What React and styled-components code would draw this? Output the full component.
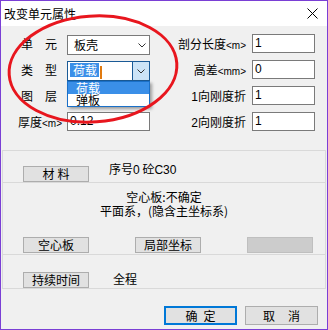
import styled, { createGlobalStyle } from 'styled-components';

const GlobalStyle = createGlobalStyle`
  html, body {
    margin: 0;
    padding: 0;
    background: #ffffff;
  }
  body {
    font-family: "Noto Sans CJK SC", "Liberation Sans", sans-serif;
    font-size: 12px;
    color: #000;
  }
  * {
    box-sizing: border-box;
  }
`;

const Window = styled.div`
  position: relative;
  width: 328px;
  height: 330px;
  border: 1px solid #7a3fd5;
  background: #f0f0f0;
  display: flex;
  flex-direction: column;
  overflow: hidden;
`;

const TitleBar = styled.div`
  height: 25px;
  flex: none;
  background: #ffffff;
  display: flex;
  align-items: center;
  justify-content: space-between;
  padding: 0 9px 0 3px;
`;

const Title = styled.span`
  font-size: 12px;
  line-height: 14px;
`;

const Body = styled.div`
  flex: 1;
  display: flex;
  flex-direction: column;
  padding: 0 1px 0 1px;
`;

const TopArea = styled.div`
  height: 124px;
  flex: none;
  display: flex;
  justify-content: space-between;
  padding: 8px 11px 0 16px;
`;

const Column = styled.div`
  display: flex;
  flex-direction: column;
`;

const Row = styled.div`
  height: 26px;
  display: flex;
  align-items: flex-start;
  justify-content: ${p => (p.$right ? 'flex-end' : 'flex-start')};
`;

const Label = styled.span`
  width: 49px;
  line-height: 19px;
  white-space: nowrap;
  padding-left: ${p => p.$indent || 0}px;
  letter-spacing: ${p => p.$spacing || 0}px;
`;

const RightLabel = styled.span`
  line-height: 19px;
  white-space: nowrap;
  padding-right: 6px;
`;

const Unit = styled.span`
  font-family: "Liberation Sans", sans-serif;
  font-size: 10px;
  letter-spacing: 0;
`;

const Digit = styled.span`
  font-family: "Liberation Sans", sans-serif;
`;

const Combo = styled.div`
  position: relative;
  width: 83px;
  height: 20px;
  margin-top: 1px;
  background: #ffffff;
  border: 1px solid ${p => (p.$focused ? '#1a5a96' : '#7a7a7a')};
  display: flex;
  align-items: center;
`;

const ComboText = styled.span`
  flex: 1;
  padding-left: 6px;
  line-height: 14px;
`;

const Selected = styled.span`
  display: inline-block;
  margin-left: -4px;
  padding: 0 2px 0 3px;
  background: #3a8fe8;
  color: #ffffff;
  line-height: 14px;
`;

const Caret = styled.span`
  display: inline-block;
  width: 2px;
  height: 13px;
  margin-left: 1px;
  vertical-align: middle;
  background: #e07a10;
`;

const ArrowBox = styled.div`
  width: ${p => (p.$active ? '17px' : '14px')};
  height: 100%;
  display: flex;
  align-items: center;
  justify-content: center;
  background: ${p => (p.$active ? '#cce4f7' : 'transparent')};
  border-left: ${p => (p.$active ? '1px solid #1a5a96' : 'none')};
`;

const DropList = styled.div`
  position: absolute;
  top: 19px;
  left: -1px;
  width: 83px;
  background: #ffffff;
  border: 1px solid #1a70c8;
  box-shadow: 2px 2px 3px rgba(0, 0, 0, 0.35);
  z-index: 2;
`;

const DropItem = styled.div`
  height: 12px;
  line-height: 12px;
  padding-left: 8px;
  background: ${p => (p.$active ? '#3a8fe8' : '#ffffff')};
  color: ${p => (p.$active ? '#ffffff' : '#000')};
  font-size: 12px;
  overflow: visible;
`;

const TextInput = styled.div`
  width: ${p => p.$width || 63}px;
  height: 19px;
  background: #ffffff;
  border: 1px solid #7a7a7a;
  padding-left: 2px;
  line-height: 17px;
  font-family: "Liberation Sans", sans-serif;
  font-size: 12px;
`;

const GroupStack = styled.div`
  border: 1px solid #d9d9d9;
  display: flex;
  flex-direction: column;
`;

const Group = styled.div`
  height: ${p => p.$height}px;
  display: flex;
  flex-direction: ${p => (p.$column ? 'column' : 'row')};
  align-items: ${p => (p.$column ? 'stretch' : 'flex-end')};
  border-top: ${p => (p.$first ? 'none' : '1px solid #d9d9d9')};
  padding-left: 20px;
`;

const InfoText = styled.span`
  align-self: ${p => (p.$top ? 'flex-start' : 'center')};
  margin-top: ${p => p.$offset || 0}px;
  margin-left: ${p => p.$left || 0}px;
  line-height: 14px;
  white-space: pre;
`;

const CenterText = styled.div`
  margin-left: -20px;
  padding-top: 7px;
  text-align: center;
  line-height: 14px;
`;

const ButtonRow = styled.div`
  margin-top: auto;
  margin-bottom: 1px;
  display: flex;
  gap: ${p => p.$gap || 46}px;
`;

const Button = styled.div`
  width: ${p => p.$width || 66}px;
  height: ${p => p.$height || 16}px;
  flex: none;
  display: flex;
  align-items: center;
  justify-content: center;
  background: ${p => (p.$disabled ? '#cccccc' : '#e1e1e1')};
  border: ${p => (p.$default ? '2px solid #0078d7' : `1px solid ${p.$disabled ? '#bfbfbf' : '#adadad'}`)};
  font-size: 12px;
  line-height: 14px;
  letter-spacing: ${p => p.$spacing || 0}px;
  text-indent: ${p => p.$spacing || 0}px;
  white-space: pre;
`;

const Footer = styled.div`
  flex: 1;
  display: flex;
  justify-content: flex-end;
  align-items: flex-start;
  gap: 8px;
  padding: 17px 8px 0 0;
`;

const Overlay = styled.svg`
  position: absolute;
  top: 0;
  left: 0;
  pointer-events: none;
  z-index: 5;
`;

const Chevron = () => (
  <svg width="8" height="5" viewBox="0 0 8 5">
    <polyline points="0.5,0.5 4,4 7.5,0.5" fill="none" stroke="#333" strokeWidth="1" />
  </svg>
);

const CloseIcon = () => (
  <svg width="11" height="11" viewBox="0 0 11 11">
    <path d="M0.5 0.5 L10.5 10.5 M10.5 0.5 L0.5 10.5" stroke="#000" strokeWidth="1" />
  </svg>
);

const App = () => {
  return (
    <>
      <GlobalStyle />
      <Window>
        <TitleBar>
          <Title>改变单元属性</Title>
          <CloseIcon />
        </TitleBar>
        <Body>
          <TopArea>
            <Column>
              <Row>
                <Label $indent={3} $spacing={12}>单元</Label>
                <Combo>
                  <ComboText>板壳</ComboText>
                  <ArrowBox><Chevron /></ArrowBox>
                </Combo>
              </Row>
              <Row>
                <Label $indent={3} $spacing={12}>类型</Label>
                <Combo $focused>
                  <ComboText><Selected>荷载</Selected><Caret /></ComboText>
                  <ArrowBox $active><Chevron /></ArrowBox>
                  <DropList>
                    <DropItem $active>荷载</DropItem>
                    <DropItem>弹板</DropItem>
                  </DropList>
                </Combo>
              </Row>
              <Row>
                <Label $indent={3} $spacing={12}>图层</Label>
                <Combo>
                  <ComboText />
                  <ArrowBox><Chevron /></ArrowBox>
                </Combo>
              </Row>
              <Row>
                <Label>厚度<Unit>&lt;m&gt;</Unit></Label>
                <TextInput $width={83}>0.12</TextInput>
              </Row>
            </Column>
            <Column>
              <Row $right>
                <RightLabel>剖分长度<Unit>&lt;m&gt;</Unit></RightLabel>
                <TextInput>1</TextInput>
              </Row>
              <Row $right>
                <RightLabel>高差<Unit>&lt;mm&gt;</Unit></RightLabel>
                <TextInput>0</TextInput>
              </Row>
              <Row $right>
                <RightLabel><Digit>1</Digit>向刚度折</RightLabel>
                <TextInput>1</TextInput>
              </Row>
              <Row $right>
                <RightLabel><Digit>2</Digit>向刚度折</RightLabel>
                <TextInput>1</TextInput>
              </Row>
            </Column>
          </TopArea>

          <GroupStack>
            <Group $first $height={31}>
              <Button $spacing={3}>材料</Button>
              <InfoText $top $offset={11} $left={20}>序号<Digit>0</Digit> 砼<Digit>C30</Digit></InfoText>
            </Group>
            <Group $column $height={72}>
              <CenterText>
                <div>空心板:不确定</div>
                <div>平面系，(隐含主坐标系)</div>
              </CenterText>
              <ButtonRow>
                <Button>空心板</Button>
                <Button>局部坐标</Button>
                <Button $disabled />
              </ButtonRow>
            </Group>
            <Group $height={34}>
              <Button>持续时间</Button>
              <InfoText $top $offset={17} $left={24}>全程</InfoText>
            </Group>
          </GroupStack>

          <Footer>
            <Button $default $width={73} $height={19} $spacing={6}>确定</Button>
            <Button $width={73} $height={19} $spacing={13}>取消</Button>
          </Footer>
        </Body>

        <Overlay width="328" height="330" viewBox="0 0 328 330">
          <ellipse
            cx="92"
            cy="68"
            rx="84"
            ry="53"
            transform="rotate(-4 92 68)"
            fill="none"
            stroke="#e8161e"
            strokeWidth="3"
          />
        </Overlay>
      </Window>
    </>
  );
};

export default App;
